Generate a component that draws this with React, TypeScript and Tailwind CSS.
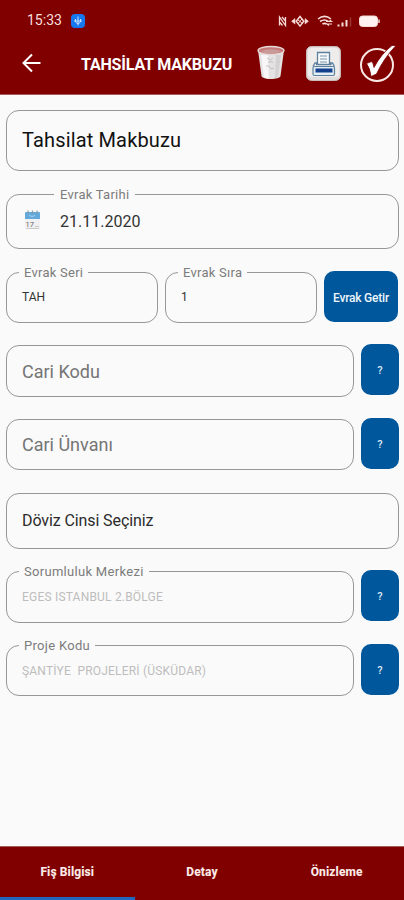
import type { ReactNode } from "react";
import { clsx } from "clsx";

type FieldProps = {
  label?: string;
  labelClass?: string;
  className?: string;
  children: ReactNode;
};

function Field({ label, labelClass, className, children }: FieldProps) {
  return (
    <div
      className={clsx(
        "relative flex items-center rounded-[13px] border border-[#979797] pl-[15px] whitespace-pre",
        className
      )}
    >
      {label && (
        <span
          className={clsx(
            "absolute -top-[8px] bg-[#fafafa] text-[13px] leading-4 text-[#7c7c7c]",
            labelClass
          )}
        >
          {label}
        </span>
      )}
      {children}
    </div>
  );
}

function SearchButton() {
  return (
    <button className="-mt-px h-[51px] w-[38px] rounded-[10px] bg-[#01579b] pt-[5px] text-[11px] font-medium text-[#dbe8f3]">
      ?
    </button>
  );
}

function StatusIcons() {
  return (
    <svg width="106" height="16" viewBox="0 0 106 16" fill="none" stroke="#f5dcd8">
      <path d="M1.500 12.500V4l6 8.500V4M4 4l3.500 4M1.500 9l3 3.500" strokeWidth="1.300" />
      <path d="M17 5.500l-3.500 2.800 3.500 2.800zM27 5.500l3.500 2.800-3.500 2.800z" fill="#f5dcd8" strokeWidth="0.500" />
      <path d="M22 3.500l3.800 4.800-3.800 4.800-3.800-4.800z" strokeWidth="1.500" />
      <path d="M19.500 6.500l5 4M24 6l-4 4.500" strokeWidth="1" />
      <path d="M40 6c4-3.300 9-3.300 13 0M42 8.500c3-2 6-2 8.500 0M44.500 11c1.500-1 2.500-1 4 0" strokeWidth="1.600" />
      <path d="M48 8.500h5.500l-2-1.500M54 11h-5l2 1.500" strokeWidth="1.100" />
      <path d="M60.500 13.500v-2M64.500 13.500v-4M68.500 13.500v-6.500" strokeWidth="2" />
      <path d="M72.500 13.500V4.500" strokeWidth="1.500" opacity="0.250" />
      <rect x="81.500" y="3" width="18" height="10.500" rx="3" fill="#fff4f2" strokeWidth="1" />
      <path d="M101 6.500v3.500" strokeWidth="1.500" />
    </svg>
  );
}

function TrashIcon() {
  return (
    <svg width="28" height="36" viewBox="0 0 28 36">
      <path d="M1 5l3.500 26c.5 4 18.500 4 19 0L27 5z" fill="#e4e2e2" />
      <path d="M4 10l3 22c2 1.500 4 1.700 5 1.700L11 10z" fill="#f8f6f6" />
      <path d="M24 10l-3 22-3 1L19 10z" fill="#d4d1d2" />
      <ellipse cx="14" cy="5.500" rx="13" ry="4" fill="#c67a7a" stroke="#e8dada" strokeWidth="1.300" />
      <path d="M4 6.500c5-3 15-3 20 0-4 2.500-16 2.500-20 0z" fill="#c99a9a" />
      <path d="M10 13l3 2 3-2M11 17.500l3-1 2 1M9 21h3l2 3 3-1" fill="none" stroke="#c2c0c3" />
    </svg>
  );
}

function PrinterIcon() {
  return (
    <svg width="36" height="36" viewBox="0 0 36 36">
      <rect x="0.500" y="0.500" width="34" height="34" rx="5" fill="#e0dddc" stroke="#c8bcba" />
      <rect x="2" y="2" width="31" height="29" rx="4" fill="#efedec" />
      <path d="M11.500 18V6.500h12V18" fill="#f7fafc" stroke="#5d819c" strokeWidth="1.300" />
      <path d="M14 10h7M14 13h7M14 16h7" stroke="#7694aa" strokeWidth="1.200" />
      <path d="M11 17H9l-2 3.500M24 17h2.500l2 3.500M10 18.500h15.500" fill="none" stroke="#5d819c" strokeWidth="1.300" />
      <rect x="7" y="20.500" width="21.500" height="9" rx="1.500" fill="#e3edf4" stroke="#5d819c" strokeWidth="1.200" />
      <rect x="9.500" y="22.500" width="17" height="4" fill="#123f8c" />
    </svg>
  );
}

function CheckIcon() {
  return (
    <svg width="38" height="38" viewBox="0 0 38 38">
      <circle cx="18" cy="20" r="16" fill="none" stroke="#f7e7e4" strokeWidth="2" />
      <path
        d="M7.500 18.500l5-2q2 1.500 2.500 6Q22 9 33 .5h4Q25 13 17.500 29l-5.500 2.500Q11 23 7.500 18.500z"
        fill="#fff"
        stroke="#800000"
        strokeWidth="0.800"
      />
    </svg>
  );
}

function CalendarIcon() {
  return (
    <svg width="17" height="20" viewBox="0 0 17 20" className="mb-[2px] ml-[2px] shrink-0">
      <rect x="1" y="8" width="15" height="11" fill="#f1f1f1" />
      <path d="M1 3q0-1 1-1h13q1 0 1 1v6H1z" fill="#64a9dc" />
      <path d="M4 0.500v3M8.500 0.500v3M13 0.500v3" stroke="#8a9aa5" strokeWidth="1.200" />
      <path d="M5 5.500l3 1 3-1" stroke="#a8d2ee" fill="none" />
      <text x="1.500" y="17" fontSize="7.500" fill="#666">17</text>
      <path d="M11 16.500h4M2 18.500h13" stroke="#c9c9c9" />
    </svg>
  );
}

function App() {
  return (
    <div className="flex h-[900px] w-[404px] flex-col overflow-hidden bg-[#fafafa] font-[Roboto,sans-serif]">
      <header className="h-[95px] border-b border-[#a85a5a] bg-[#800000] text-white">
        <div className="flex h-[41px] items-center pl-[27px]">
          <span className="w-[44px] text-[14px] text-[#f8dfdb]">15:33</span>
          <svg width="14" height="14" viewBox="0 0 14 14">
            <rect width="14" height="14" rx="4" fill="#1677ee" />
            <path d="M7 2.500v9M4.500 5v3L7 10M9.500 5v3L7 10M3 7h8" stroke="#c9e3ff" fill="none" />
          </svg>
          <div className="ml-[193px] flex">
            <StatusIcons />
          </div>
        </div>
        <div className="flex h-[46px] items-center">
          <svg width="20" height="20" viewBox="0 0 20 20" className="-mt-[2px] ml-[21px]" fill="none" stroke="#fff" strokeWidth="2">
            <path d="M19.500 10H2.500M11 1.500L2.500 10l8.500 8.500" />
          </svg>
          <h1 className="ml-[40px] w-[176px] pt-[2px] text-[16px] font-bold tracking-[-0.170px] whitespace-nowrap">
            TAHSİLAT MAKBUZU
          </h1>
          <div className="-mt-[3px]">
            <TrashIcon />
          </div>
          <div className="ml-[21px]">
            <PrinterIcon />
          </div>
          <div className="-mt-px ml-[17px]">
            <CheckIcon />
          </div>
        </div>
      </header>

      <main className="flex flex-1 flex-col pt-[14.500px] pr-[5px] pl-[6px]">
        <Field className="h-[61px] text-[20px] tracking-[0.150px] text-[#111]">Tahsilat Makbuzu</Field>
        <Field
          label="Evrak Tarihi"
          labelClass="left-[47px] px-[6px] tracking-[0.250px]"
          className="mt-[23px] h-[55px]"
        >
          <CalendarIcon />
          <span className="ml-[19px] pt-[2px] text-[16px] text-[#333]">21.11.2020</span>
        </Field>

        <div className="mt-[23px] flex">
          <Field label="Evrak Seri" labelClass="left-[12px] px-[5px] tracking-[0.250px]" className="h-[51px] w-[152px] text-[12px] text-[#333]">
            TAH
          </Field>
          <Field label="Evrak Sıra" labelClass="left-[12px] px-[5px] tracking-[0.250px]" className="ml-[7px] h-[51px] w-[152px] text-[12px] text-[#333]">
            1
          </Field>
          <button className="-mt-px ml-[7px] h-[51px] w-[74px] rounded-[10px] bg-[#01579b] pt-[3px] text-[12px] font-medium tracking-[-0.200px] text-[#eef5fb]">
            Evrak Getir
          </button>
        </div>

        <div className="mt-[22px] flex justify-between">
          <Field className="h-[52px] w-[348px] pt-px text-[18px] text-[#757575]">Cari Kodu</Field>
          <SearchButton />
        </div>
        <div className="mt-[22px] flex justify-between">
          <Field className="h-[51px] w-[348px] text-[18px] text-[#757575]">Cari Ünvanı</Field>
          <SearchButton />
        </div>

        <Field className="mt-[23px] h-[56px] text-[16px] tracking-[-0.100px] text-[#2b2b2b]">Döviz Cinsi Seçiniz</Field>

        <div className="mt-[22px] flex justify-between">
          <Field
            label="Sorumluluk Merkezi"
            labelClass="left-[12px] px-[5px] tracking-[0.300px]"
            className="h-[52px] w-[348px] text-[12px] tracking-[0.200px] text-[#bdbdbd]"
          >
            EGES ISTANBUL 2.BÖLGE
          </Field>
          <SearchButton />
        </div>
        <div className="mt-[22px] flex justify-between">
          <Field
            label="Proje Kodu"
            labelClass="left-[12px] px-[5px] tracking-[0.300px]"
            className="h-[51px] w-[348px] pt-px text-[12px] tracking-[0.200px] text-[#bdbdbd]"
          >
            {"ŞANTİYE  PROJELERİ (ÜSKÜDAR)"}
          </Field>
          <SearchButton />
        </div>
      </main>

      <nav className="h-[54px] border-t border-[#a85a5a] bg-[#800000]">
        <div className="grid h-[50px] grid-cols-3 items-center text-center text-[12px] font-extrabold tracking-[0.100px] text-[#fbeae7]">
          <span>Fiş Bilgisi</span>
          <span>Detay</span>
          <span>Önizleme</span>
        </div>
        <div className="h-[3px] w-[135px] bg-[#2368bf]" />
      </nav>
    </div>
  );
}

export default App;
